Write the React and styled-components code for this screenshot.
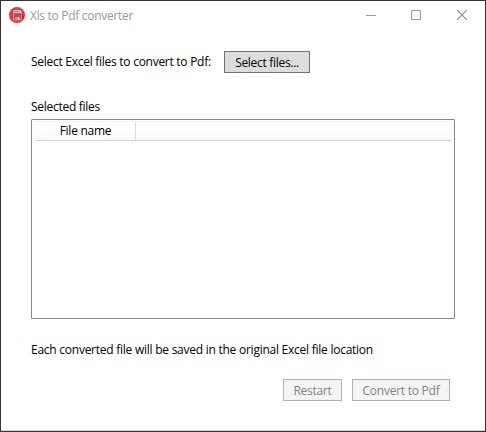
import React from "react";
import styled, { createGlobalStyle } from "styled-components";

const GlobalStyle = createGlobalStyle`
  * { box-sizing: border-box; }
  body { margin: 0; background: #fff; }
`;

const Window = styled.div`
  width: 486px;
  height: 432px;
  display: flex;
  flex-direction: column;
  background: #fff;
  border: 1px solid #373739;
  box-shadow: inset 0 -1px 0 #d4d4d4;
  font-family: "Open Sans", "Noto Sans", sans-serif;
  font-size: 12px;
  line-height: 16px;
  color: #000;
`;

const TitleBar = styled.header`
  display: flex;
  align-items: center;
  height: 28px;
  padding-left: 8px;
`;

const Text = styled.span`
  display: block;
  white-space: nowrap;
  letter-spacing: ${(p) => p.$track || "-0.25px"};
`;

const Title = styled(Text)`
  flex: 1;
  margin-left: 5px;
  padding-top: 2px;
  color: #999;
`;

const Caption = styled.button`
  width: ${(p) => p.$width}px;
  height: 28px;
  padding: 0;
  border: 0;
  background: none;
  display: flex;
  align-items: center;
  justify-content: center;
`;

const Content = styled.main`
  display: flex;
  flex-direction: column;
  padding: 22px 30px 0;
`;

const PickerRow = styled.div`
  display: flex;
  align-items: center;
  height: 22px;
`;

const PickerLabel = styled(Text)`
  width: 193px;
`;

const Button = styled.button`
  width: ${(p) => p.$width}px;
  height: 22px;
  padding: 2px 0 0;
  display: flex;
  align-items: center;
  justify-content: center;
  font: inherit;
  border: 1px solid #707070;
  border-radius: 0;
  background: #ddd;
  color: #000;

  &:disabled {
    border-color: #adb2b5;
    background: #f4f4f4;
    color: #838383;
  }
`;

const ListLabel = styled(Text)`
  margin-top: 26px;
`;

const FileList = styled.div`
  width: 424px;
  height: 200px;
  margin-top: 4px;
  padding: 1px 3px;
  border: 1px solid #828790;
  border-radius: 1px;
`;

const ListHeader = styled.div`
  display: flex;
  height: 20px;
  border-top: 1px solid #f2f2f3;
  border-bottom: 1px solid #d5d5d5;
  background: linear-gradient(#fff, #fff 30%, #f7f8fa);
`;

const Column = styled.div`
  width: 101px;
  display: flex;
  align-items: center;
  justify-content: center;
  padding-left: 1px;
  border-right: 1px solid #dedfe1;
`;

const Note = styled(Text)`
  margin-top: 23px;
`;

const Actions = styled.footer`
  display: flex;
  justify-content: flex-end;
  gap: 10px;
  margin-top: 21px;
  padding-right: 5px;
`;

function AppIcon() {
  return (
    <svg width="16" height="16" viewBox="0 0 16 16">
      <circle cx="8" cy="8" r="8" fill="#dc3b42" />
      <path d="M5 13.5h7.5L15.2 11 12 4z" fill="#b5262f" />
      <path d="M4.5 3.5h7l1 1v8.5h-8z" fill="#c9424a" stroke="#e9a3a7" strokeWidth=".8" />
      <path d="M5 3.2h7v3H5z" fill="#efc3c5" />
      <path d="M5.5 4.5h1M7.5 4.5h1M9.5 4.5h1" stroke="#bd3940" />
      <path d="M6 10h5v3H6z" fill="#d9858a" />
      <path d="M9 10h1v3H9z" fill="#fff" />
    </svg>
  );
}

export default function App() {
  return (
    <>
      <GlobalStyle />
      <Window>
        <TitleBar>
          <AppIcon />
          <Title $track="-0.3px">Xls to Pdf converter</Title>
          <Caption $width={44} aria-label="Minimize">
            <svg width="10" height="10"><path d="M0 5.5h10" stroke="#999" /></svg>
          </Caption>
          <Caption $width={46} aria-label="Maximize">
            <svg width="10" height="10"><path d="M.5.5h9v9h-9z" fill="none" stroke="#999" /></svg>
          </Caption>
          <Caption $width={46} aria-label="Close">
            <svg width="10" height="10"><path d="M0 0l10 10M10 0L0 10" stroke="#8c8c8c" strokeWidth="1.1" /></svg>
          </Caption>
        </TitleBar>
        <Content>
          <PickerRow>
            <PickerLabel $track="-0.27px">Select Excel files to convert to Pdf:</PickerLabel>
            <Button $width={86}><Text $track="-0.3px">Select files...</Text></Button>
          </PickerRow>
          <ListLabel $track="-0.28px">Selected files</ListLabel>
          <FileList>
            <ListHeader>
              <Column><Text>File name</Text></Column>
            </ListHeader>
          </FileList>
          <Note>Each converted file will be saved in the original Excel file location</Note>
          <Actions>
            <Button $width={59} disabled><Text>Restart</Text></Button>
            <Button $width={98} disabled><Text>Convert to Pdf</Text></Button>
          </Actions>
        </Content>
      </Window>
    </>
  );
}
